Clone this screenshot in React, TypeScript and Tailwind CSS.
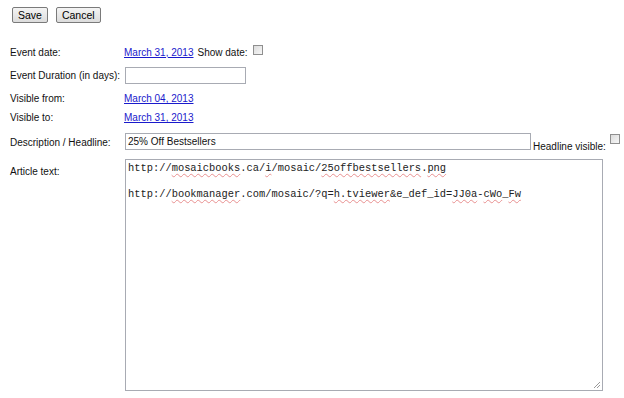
import type { ReactNode } from 'react';

const sans = "font-['Liberation_Sans',Arial,sans-serif]";

function Checkbox() {
  return (
    <span className="inline-block w-[10px] h-[10px] border border-[#8f8f8f] bg-gradient-to-br from-[#dcdcdc] to-[#f7f7f7]" />
  );
}

function Misspelled({ children }: { children: ReactNode }) {
  return (
    <span className="underline decoration-wavy decoration-[#e89090] decoration-[1px] underline-offset-[2px]">
      {children}
    </span>
  );
}

function DateLink({ children }: { children: ReactNode }) {
  return <a href="#" className="text-[#1a1acc] underline">{children}</a>;
}

function Btn({ children }: { children: ReactNode }) {
  return (
    <button className="h-[16px] px-[5px] leading-none text-[10.5px] text-black border border-[#7a7a7a] rounded-[2px] bg-gradient-to-b from-[#f4f4f4] to-[#dcdcdc]">
      {children}
    </button>
  );
}

export default function App() {
  return (
    <div className={`w-[624px] h-[398px] bg-white overflow-hidden text-[10px] text-[#111] ${sans}`}>
      {/* Toolbar */}
      <div className="flex gap-[8px] pl-[12px] pt-[7px]">
        <Btn>Save</Btn>
        <Btn>Cancel</Btn>
      </div>

      <div className="pl-[10px] mt-[19px] grid grid-cols-[114px_1fr]">
        {/* Event date */}
        <div className="h-[20px] flex items-center">Event date:</div>
        <div className="h-[20px] flex items-center gap-[4px]">
          <DateLink>March 31, 2013</DateLink>
          <span>Show date:</span>
          <span className="ml-[1px] -mt-[4px] flex"><Checkbox /></span>
        </div>

        {/* Event duration */}
        <div className="mt-[2px] h-[23px] flex items-center">Event Duration (in days):</div>
        <div className="mt-[2px] h-[23px] flex items-center">
          <div className="ml-[1px] w-[121px] h-[17px] border border-[#a8abb3] bg-white" />
        </div>

        {/* Visible from / to */}
        <div className="mt-[2px] h-[19px] flex items-center">Visible from:</div>
        <div className="mt-[2px] h-[19px] flex items-center"><DateLink>March 04, 2013</DateLink></div>
        <div className="h-[19px] flex items-center">Visible to:</div>
        <div className="h-[19px] flex items-center"><DateLink>March 31, 2013</DateLink></div>

        {/* Description */}
        <div className="mt-[4px] h-[20px] flex items-center pt-[3px]">Description / Headline:</div>
        <div className="mt-[4px] h-[20px] flex items-start">
          <div className="ml-[1px] mt-[2px] w-[406px] h-[17px] border border-[#a8abb3] bg-white flex items-center pl-[2px]">
            25% Off Bestsellers
          </div>
          <span className="ml-[2px] mt-[8px]">Headline visible:</span>
          <span className="ml-[4px] mt-[3px] flex"><Checkbox /></span>
        </div>

        {/* Article text */}
        <div className="mt-[8px] pt-[5px]">Article text:</div>
        <div className="mt-[8px]">
          <div className="relative ml-[1px] w-[478px] h-[232px] border border-[#a8abb3] bg-white pl-[2px] pt-[2px] font-['Liberation_Mono','Courier_New',monospace] text-[10.4px] leading-[13px] text-[#222] whitespace-pre">
            <div>
              http://<Misspelled>mosaicbooks</Misspelled>.ca/<Misspelled>i</Misspelled>/mosaic/
              <Misspelled>25offbestsellers</Misspelled>.<Misspelled>png</Misspelled>
            </div>
            <div>&nbsp;</div>
            <div>
              http://<Misspelled>bookmanager</Misspelled>.com/mosaic/?q=<Misspelled>h.tviewer</Misspelled>
              &amp;e_def_id=<Misspelled>JJ0a</Misspelled>-<Misspelled>cWo</Misspelled>_<Misspelled>Fw</Misspelled>
            </div>
            <svg className="absolute right-[1px] bottom-[1px]" width="9" height="9" viewBox="0 0 9 9">
              <path d="M8 2 L2 8 M8 5 L5 8" stroke="#9a9a9a" strokeWidth="1" />
            </svg>
          </div>
        </div>
      </div>
    </div>
  );
}
